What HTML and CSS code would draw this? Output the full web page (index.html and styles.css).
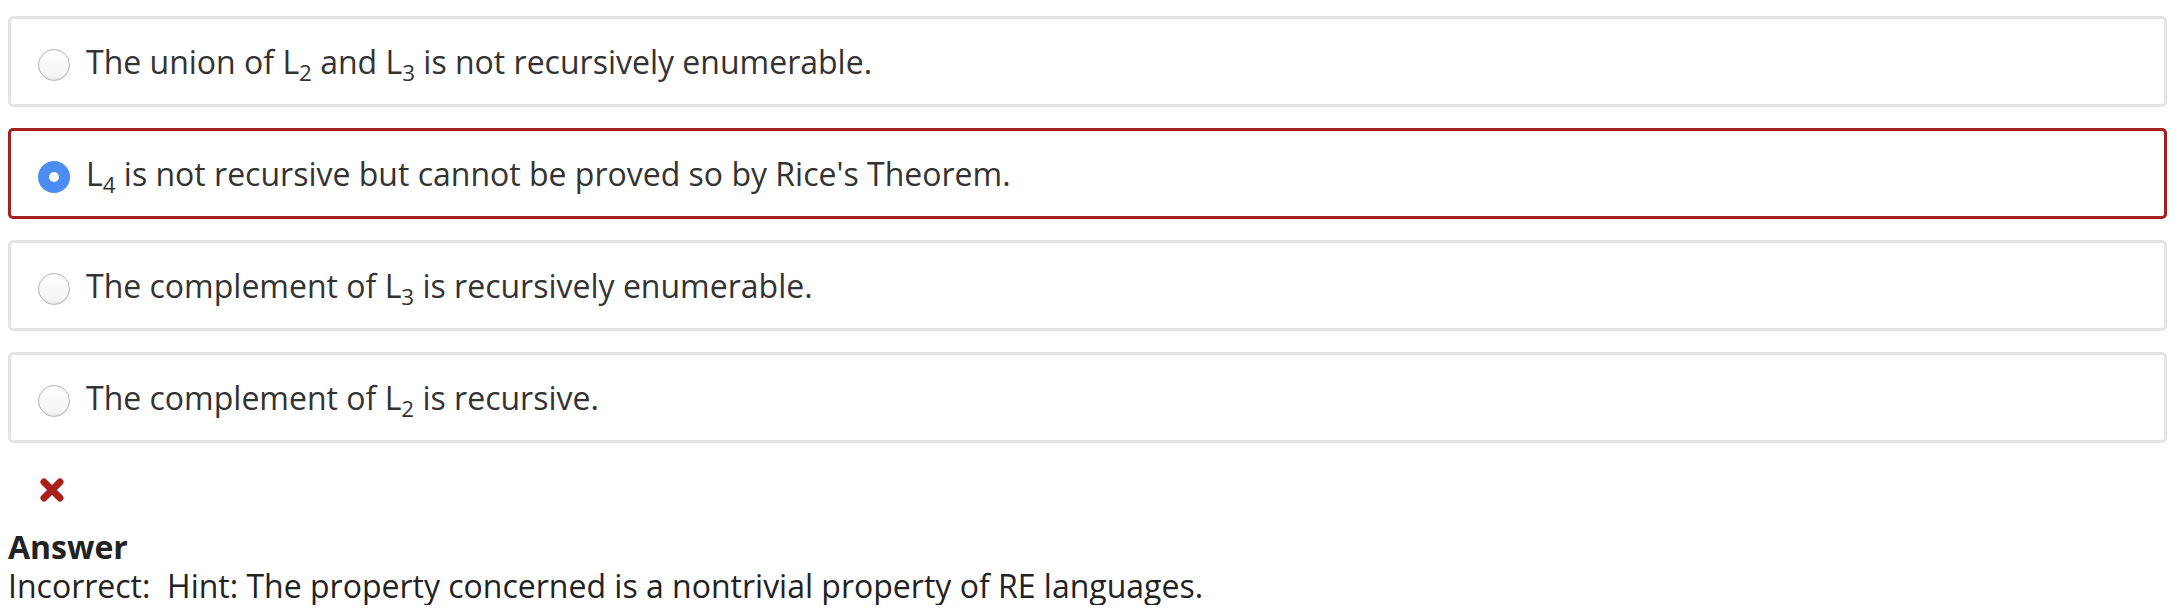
FILE: index.html
```html
<!DOCTYPE html>
<html lang="en">
<head>
<meta charset="utf-8">
<title>Question</title>
<link rel="stylesheet" href="styles.css">
</head>
<body>
<div class="question">
  <div class="options">
    <label class="option">
      <span class="radio"></span>
      <span class="text">The union of L<sub>2</sub> and L<sub>3</sub> is not recursively enumerable.</span>
    </label>
    <label class="option option-wrong">
      <span class="radio radio-checked"><span class="dot"></span></span>
      <span class="text">L<sub>4</sub> is not recursive but cannot be proved so by Rice's Theorem.</span>
    </label>
    <label class="option">
      <span class="radio"></span>
      <span class="text">The complement of L<sub>3</sub> is recursively enumerable.</span>
    </label>
    <label class="option">
      <span class="radio"></span>
      <span class="text">The complement of L<sub>2</sub> is recursive.</span>
    </label>
  </div>
  <div class="feedback">
    <svg class="xmark" width="26" height="26" viewBox="0 0 26 26" aria-hidden="true">
      <path d="M5 5 L21 21 M21 5 L5 21" stroke="#a8201a" stroke-width="7" stroke-linecap="round"/>
    </svg>
    <div class="answer-title">Answer</div>
    <div class="answer-text">Incorrect:&nbsp; Hint: The property concerned is a nontrivial property of RE languages.</div>
  </div>
</div>
</body>
</html>
```
FILE: styles.css
```css
html, body {
  margin: 0;
  padding: 0;
  background: #ffffff;
}
body {
  font-family: "Open Sans", "Liberation Sans", sans-serif;
  color: #333333;
}
.question {
  padding: 16px 15px 0 8px;
}
.options {
  display: flex;
  flex-direction: column;
  gap: 21px;
}
.option {
  box-sizing: border-box;
  height: 91px;
  border: 3px solid #e4e4e4;
  border-radius: 5px;
  display: flex;
  align-items: center;
  padding-left: 27px;
  gap: 16px;
  font-size: 32px;
  line-height: 44px;
}
.option-wrong {
  border-color: #a51f1f;
}
.radio {
  box-sizing: border-box;
  width: 32px;
  height: 32px;
  border-radius: 50%;
  border: 1.5px solid #b8b8b8;
  background: linear-gradient(#ffffff, #f2f2f2);
  box-shadow: inset 0 -1px 1px rgba(0,0,0,0.08);
  margin-top: 7px;
  flex: none;
  display: flex;
  align-items: center;
  justify-content: center;
}
.radio-checked {
  border: none;
  background: #4b8df2;
  box-shadow: none;
}
.dot {
  width: 10px;
  height: 10px;
  border-radius: 50%;
  background: #ffffff;
}
.text sub {
  font-size: 0.7em;
  line-height: 0;
  vertical-align: -7px;
}
.feedback {
  padding-top: 34px;
}
.xmark {
  display: block;
  margin-left: 31px;
}
.answer-title {
  font-weight: 700;
  font-size: 32px;
  line-height: 39px;
  color: #222222;
  margin-top: 24px;
}
.answer-text {
  font-size: 32px;
  line-height: 39px;
  color: #222222;
}
```
